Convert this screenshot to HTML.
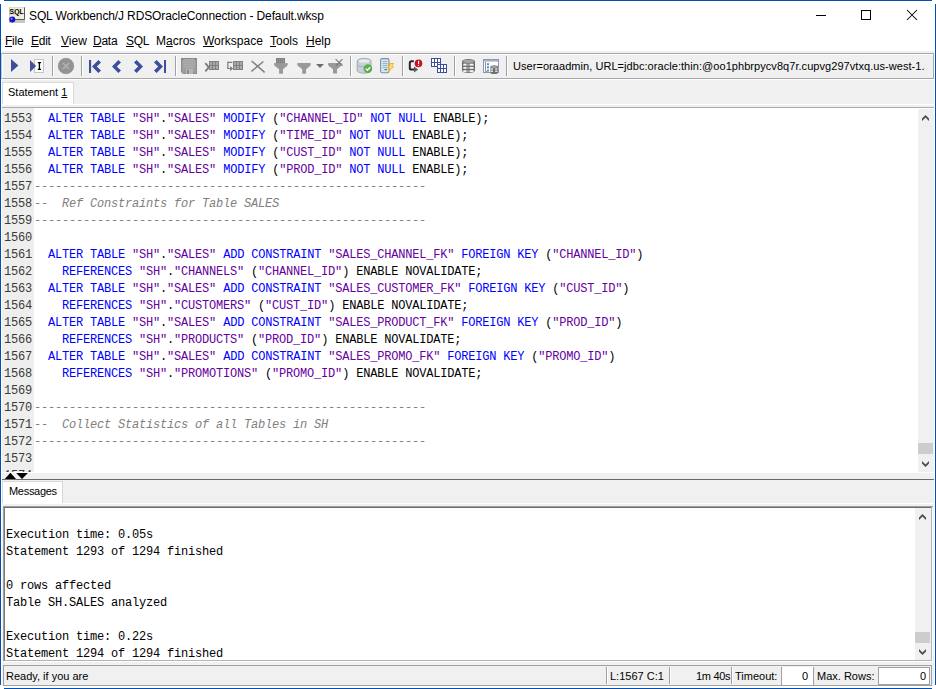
<!DOCTYPE html>
<html><head><meta charset="utf-8">
<style>
*{box-sizing:border-box;margin:0;padding:0}
html,body{width:936px;height:689px;overflow:hidden;background:#fff}
body{position:relative;font-family:"Liberation Sans",sans-serif;font-size:11px;color:#000}
.a{position:absolute}
.t{position:absolute;white-space:pre;line-height:11px;font-size:11px}
.m{position:absolute;white-space:pre;line-height:12px;font-size:12px}
.u{text-decoration:underline;text-underline-offset:1px}
.kw{color:#0000ff}
.st{color:#6600a0}
.cm{color:#808080;font-style:italic}
.cl{position:absolute;left:0;height:17px;line-height:17px;white-space:pre;font-family:"Liberation Mono",monospace;font-size:12px;letter-spacing:-0.2px;padding-left:32px;width:916px}
.ln{position:absolute;left:0;width:30px;text-align:right;color:#3a3a3a}
.ml{position:absolute;left:6px;height:17px;line-height:17px;white-space:pre;font-family:"Liberation Mono",monospace;font-size:12px;letter-spacing:-0.2px}
</style></head><body>
<!-- window border -->
<div class="a" style="left:4px;top:0;width:928px;height:1px;background:#0050b0"></div>
<div class="a" style="left:0;top:4px;width:1px;height:681px;background:#0050b0"></div>
<div class="a" style="left:935px;top:4px;width:1px;height:681px;background:#0050b0"></div>
<div class="a" style="left:4px;top:688px;width:928px;height:1px;background:#0050b0"></div>

<!-- title bar -->
<svg class="a" style="left:0;top:0" width="40" height="30" viewBox="0 0 40 30">
 <rect x="9" y="7" width="16" height="16" fill="#c8c8c8"/>
 <rect x="10" y="7.5" width="14" height="11.5" fill="#f4f2dc"/>
 <path d="M10,14.5H23.5M14.5,8V19M19,8V19" stroke="#d8d6c0" stroke-width="0.8"/>
 <path d="M24.5,7.5V19.5H12" stroke="#5a5a5a" stroke-width="1" fill="none"/>
 <text x="9.6" y="14" font-family="Liberation Sans" font-weight="bold" font-size="7.4" fill="#000" textLength="14" lengthAdjust="spacingAndGlyphs">SQL</text>
 <circle cx="12.3" cy="19.6" r="3" fill="#1414c8"/>
 <circle cx="11.6" cy="18.8" r="1" fill="#8a8aff"/>
</svg>
<div class="m" id="title" style="left:29px;top:10px;letter-spacing:-0.12px">SQL Workbench/J RDSOracleConnection - Default.wksp</div>
<div class="a" style="left:816px;top:15px;width:10px;height:1px;background:#000"></div>
<div class="a" style="left:861px;top:10px;width:10px;height:10px;border:1px solid #000"></div>
<svg class="a" style="left:900px;top:5px" width="24" height="20" viewBox="900 5 24 20">
 <path d="M907,10L917,20M917,10L907,20" stroke="#000" stroke-width="1.05"/>
</svg>

<!-- menu -->
<div id="menu">
<div class="m" style="left:5px;top:35px;letter-spacing:-0.25px"><span class="u">F</span>ile</div>
<div class="m" style="left:31px;top:35px;letter-spacing:-0.25px"><span class="u">E</span>dit</div>
<div class="m" style="left:61px;top:35px"><span class="u">V</span>iew</div>
<div class="m" style="left:93px;top:35px;letter-spacing:-0.25px"><span class="u">D</span>ata</div>
<div class="m" style="left:126px;top:35px;letter-spacing:-0.25px"><span class="u">S</span>QL</div>
<div class="m" style="left:156px;top:35px">M<span class="u">a</span>cros</div>
<div class="m" style="left:203px;top:35px"><span class="u">W</span>orkspace</div>
<div class="m" style="left:270px;top:35px"><span class="u">T</span>ools</div>
<div class="m" style="left:306px;top:35px"><span class="u">H</span>elp</div>
</div>

<!-- main gray area -->
<div class="a" style="left:1px;top:51px;width:934px;height:637px;background:#f0f0f0"></div>
<div class="a" style="left:1px;top:51px;width:1px;height:637px;background:#fff"></div>
<div class="a" style="left:934px;top:51px;width:1px;height:637px;background:#fff"></div>
<div class="a" style="left:1px;top:686px;width:934px;height:2px;background:#fff"></div>

<!-- toolbar -->
<div class="a" style="left:1px;top:53px;width:933px;height:26px;border:1px solid #a8a8a8;border-left-color:#c8c8c8;background:#f0f0f0;box-shadow:inset 1px 1px 0 #fff"></div>
<div class="a" style="left:2px;top:79px;width:932px;height:1px;background:#fff"></div>
<div id="toolbar">
<svg class="a" style="left:0;top:0" width="936" height="90" viewBox="0 0 936 90">
<g fill="#3d4f9e">
 <polygon points="11,59 18.4,65.5 11,72.1"/>
</g>
<rect x="34.5" y="59.5" width="9" height="13" fill="#fff" stroke="#c4c4c4"/>
<polygon points="30,60 36.2,66 30,72.1" fill="#47529f"/>
<path d="M37.8,62.6h3.2M39.4,62.6v6.8M37.8,69.4h3.2" stroke="#000" stroke-width="1.3" fill="none"/>
<g fill="#a0a0a0">
 <rect x="52" y="56" width="1" height="20"/><rect x="81" y="56" width="1" height="20"/>
 <rect x="175" y="56" width="1" height="20"/><rect x="350" y="56" width="1" height="20"/>
 <rect x="402" y="56" width="1" height="20"/><rect x="454" y="56" width="1" height="20"/>
 <rect x="506" y="56" width="1" height="20"/>
</g>
<g fill="#ffffff">
 <rect x="53" y="56" width="1" height="20"/><rect x="82" y="56" width="1" height="20"/>
 <rect x="176" y="56" width="1" height="20"/><rect x="351" y="56" width="1" height="20"/>
 <rect x="403" y="56" width="1" height="20"/><rect x="455" y="56" width="1" height="20"/>
 <rect x="507" y="56" width="1" height="20"/>
</g>
<circle cx="66" cy="66" r="7.8" fill="#939393" stroke="#8a8a8a" stroke-width="0.6"/>
<path d="M63,63L69,69M69,63L63,69" stroke="#b4b4b4" stroke-width="1.6"/>
<g fill="#3c4e9c">
 <rect x="89" y="60" width="2.1" height="13"/>
 <polygon points="92,66.5 98.4,60 101,62.4 96.8,66.5 101,70.6 98.4,73"/>
 <polygon points="112,66.5 118.4,60 121,62.4 116.8,66.5 121,70.6 118.4,73"/>
 <polygon points="143,66.5 136.6,60 134,62.4 138.2,66.5 134,70.6 136.6,73"/>
 <polygon points="163,66.5 156.6,60 154,62.4 158.2,66.5 154,70.6 156.6,73"/>
 <rect x="164" y="60" width="2" height="13"/>
</g>
<!-- floppy -->
<path d="M181,58H197V74H183L181,72Z" fill="#8c8c8c"/>
<rect x="182" y="59" width="14" height="14" fill="#9e9e9e"/>
<rect x="183.5" y="59" width="11" height="9" fill="#aaaaaa"/>
<path d="M184,61.5h10M184,63.5h10M184,65.5h10" stroke="#a0a0a0" stroke-width="0.7"/>
<rect x="182" y="59" width="1" height="1" fill="#7a7a7a"/><rect x="195" y="59" width="1" height="1" fill="#7a7a7a"/>
<rect x="186" y="69" width="7" height="5" fill="#b5b5b5"/>
<rect x="187" y="70" width="2" height="4" fill="#8c8c8c"/>
<!-- insert row -->
<g>
 <rect x="209" y="61" width="10" height="9" fill="#808080"/>
 <g fill="#a9a9a9"><rect x="210" y="62" width="2" height="3"/><rect x="213" y="62" width="2" height="3"/><rect x="216" y="62" width="2" height="3"/>
 <rect x="210" y="66" width="2" height="3"/><rect x="213" y="66" width="2" height="3"/><rect x="216" y="66" width="2" height="3"/></g>
 <path d="M205.3,63.2L208.8,67.3L205.3,71.4" stroke="#7a7a7a" stroke-width="1.8" fill="none"/>
</g>
<g>
 <rect x="233" y="61" width="10" height="9" fill="#808080"/>
 <g fill="#a9a9a9"><rect x="234" y="62" width="2" height="3"/><rect x="237" y="62" width="2" height="3"/><rect x="240" y="62" width="2" height="3"/>
 <rect x="234" y="66" width="2" height="3"/><rect x="237" y="66" width="2" height="3"/><rect x="240" y="66" width="2" height="3"/></g>
 <path d="M232.3,62.3H227.8V68.5H231.5" stroke="#7a7a7a" stroke-width="1.2" fill="none"/>
 <polygon points="230.2,66 233,68.5 230.2,71.2" fill="#7a7a7a"/>
</g>
<path d="M251.6,61L264.6,72.4M263.4,61.5L251.4,71.4" stroke="#808080" stroke-width="1.5"/>
<!-- funnels -->
<rect x="276" y="58" width="9" height="5" fill="#808080"/>
<g fill="#a5a5a5"><rect x="277" y="59" width="1" height="1"/><rect x="279" y="59" width="1" height="1"/><rect x="281" y="59" width="1" height="1"/><rect x="283" y="59" width="1" height="1"/>
<rect x="277" y="61" width="1" height="1"/><rect x="279" y="61" width="1" height="1"/><rect x="281" y="61" width="1" height="1"/><rect x="283" y="61" width="1" height="1"/></g>
<g fill="#999999">
 <polygon points="274.2,63 287.6,63 287.6,65.5 283,69.2 283,73.7 279.1,73.7 279.1,69.2 274.2,65.5"/>
 <polygon points="297.4,63 310.6,63 310.6,65.5 306.1,69.2 306.1,73.8 302.2,73.8 302.2,69.2 297.4,65.5"/>
 <polygon points="328.2,63 341.7,63 341.7,65.5 337,69.2 337,73.5 333,73.5 333,69.2 328.2,65.5"/>
</g>
<polygon points="316,64 324,64 320,68.1" fill="#6c6c6c"/>
<path d="M335.6,59.2L342.6,65.6M342.4,59.2L336,65.6" stroke="#767676" stroke-width="1.1"/>
<!-- db check -->
<path d="M357.2,61A6.9,2.6 0 0 1 371,61V70.6A6.9,2.6 0 0 1 357.2,70.6Z" fill="#c9d0d8" stroke="#9ba4ae" stroke-width="0.9"/>
<ellipse cx="364.1" cy="61" rx="5.6" ry="1.6" fill="#e8edf2"/>
<path d="M357.4,65.3A6.9,2.2 0 0 0 370.8,65.3" stroke="#9ba4ae" stroke-width="0.8" fill="none"/>
<circle cx="367.9" cy="68.6" r="4.3" fill="#5aae4e"/>
<path d="M365.8,68.6L367.4,70.2L370.2,67.2" stroke="#fff" stroke-width="1.3" fill="none"/>
<!-- server lightning -->
<rect x="380.6" y="58.6" width="8.4" height="14.2" rx="1.6" fill="#dce5ee" stroke="#7b90aa" stroke-width="1.1"/>
<path d="M382.5,61.6h5M382.5,63.6h5M382.5,65.6h5M382.5,67.6h5" stroke="#8aa0b9" stroke-width="0.8"/>
<rect x="384.5" y="69" width="2.5" height="1.2" fill="#2f9a2f"/>
<polygon points="389.8,63 394.2,63 392.2,66.4 394.4,66.4 387.6,73 389.6,68.4 387.4,68.4" fill="#f2ae2c"/>
<polygon points="390.6,64 392.8,64 391.2,67.2 392.6,67.2 389.4,70.8 390.3,67.9 389,67.9" fill="#fbe27a"/>
<!-- loop arrow -->
<path d="M413.8,61.3H411.2Q409.8,61.3 409.8,62.8V68Q409.8,69.6 411.4,69.6H415" stroke="#262626" stroke-width="2" fill="none"/>
<polygon points="414,66.6 418.2,69.6 414,72.6" fill="#5a5a5a"/>
<circle cx="418.5" cy="63.4" r="3.8" fill="#c5141b"/>
<rect x="418" y="60.8" width="1.1" height="3.2" fill="#fff"/><rect x="418" y="64.8" width="1.1" height="1.1" fill="#fff"/>
<!-- grids -->
<g fill="#3b4d9b">
 <rect x="431" y="58" width="10" height="9"/>
</g>
<g fill="#fff"><rect x="432" y="59" width="2" height="3"/><rect x="435" y="59" width="2" height="3"/><rect x="438" y="59" width="2" height="3"/>
<rect x="432" y="63" width="2" height="3"/><rect x="435" y="63" width="2" height="3"/><rect x="438" y="63" width="2" height="3"/></g>
<rect x="437" y="64" width="10" height="9" fill="#3b4d9b"/>
<g fill="#fff"><rect x="438" y="65" width="2" height="3"/><rect x="441" y="65" width="2" height="3"/><rect x="444" y="65" width="2" height="3"/>
<rect x="438" y="69" width="2" height="3"/><rect x="441" y="69" width="2" height="3"/><rect x="444" y="69" width="2" height="3"/></g>
<!-- db gray -->
<path d="M462,61.4A6.5,2.4 0 0 1 475,61.4V70.6A6.5,2.4 0 0 1 462,70.6Z" fill="#6c6c6c"/>
<ellipse cx="468.5" cy="61.4" rx="5.6" ry="1.7" fill="#a8a8a8"/>
<g fill="#9c9c9c"><rect x="463" y="63.6" width="11" height="2.2" rx="0.6"/><rect x="463" y="66.8" width="11" height="2.2" rx="0.6"/><rect x="463" y="70" width="11" height="2.2" rx="0.6"/></g>
<g fill="#f4f4f4"><rect x="463.4" y="63.8" width="3" height="1.8" rx="0.5"/><rect x="463.4" y="67" width="3" height="1.8" rx="0.5"/><rect x="463.4" y="70.2" width="3" height="1.8" rx="0.5"/>
<rect x="469.8" y="63.8" width="3.6" height="1.8" rx="0.5"/><rect x="469.8" y="67" width="3.6" height="1.8" rx="0.5"/><rect x="469.8" y="70.2" width="3.6" height="1.8" rx="0.5"/></g>
<!-- window db -->
<rect x="483.5" y="59.5" width="15" height="13" fill="#fff" stroke="#8799b4"/>
<rect x="484" y="60" width="14" height="1.6" fill="#a3b0c6"/>
<path d="M485.5,62V71.5H487" stroke="#666" stroke-width="0.7" fill="none"/>
<g fill="#5590d0"><rect x="487" y="63.2" width="2" height="2"/><rect x="487" y="66.4" width="2" height="2"/><rect x="487" y="69.6" width="2" height="2"/></g>
<path d="M490.4,66.8A3.8,1.5 0 0 1 498,66.8V72.4A3.8,1.5 0 0 1 490.4,72.4Z" fill="#707070"/>
<ellipse cx="494.2" cy="66.8" rx="3.2" ry="1" fill="#a8a8a8"/>
<g fill="#f0f0f0"><rect x="491" y="68.3" width="2" height="1.3"/><rect x="495.2" y="68.3" width="2.2" height="1.3"/><rect x="491" y="70.6" width="2" height="1.3"/><rect x="495.2" y="70.6" width="2.2" height="1.3"/></g>
</svg>
</div>
<div class="a" style="left:513px;top:56px;width:412px;height:18px;overflow:hidden"><div class="t" style="left:0;top:5px;letter-spacing:0.055px">User=oraadmin, URL=jdbc:oracle:thin:@oo1phbrpycv8q7r.cupvg297vtxq.us-west-1.amazonaws.com:1521:ORCL</div></div>

<!-- statement tab -->
<div class="a" style="left:2px;top:82px;width:72px;height:23px;background:#fff;border:1px solid #d9d9d9;border-bottom:none"></div>
<div class="a" style="left:2px;top:104px;width:932px;height:1px;background:#fff"></div>
<div class="t" style="left:8px;top:87px">Statement <span class="u">1</span></div>
<div class="a" style="left:2px;top:107px;width:932px;height:1px;background:#ababab"></div>

<!-- editor -->
<div class="a" style="left:2px;top:108px;width:916px;height:365px;background:#fff;overflow:hidden">
  <div class="a" style="left:0;top:0;width:32px;height:364px;background:#eeefec;overflow:hidden"></div>
<div id="code" class="a" style="left:0;top:0;width:916px;height:364px;overflow:hidden">
<div class="cl" style="top:3px"><span class="ln">1553</span>  <span class="kw">ALTER</span> <span class="kw">TABLE</span> <span class="st">"SH"</span>.<span class="st">"SALES"</span> <span class="kw">MODIFY</span> (<span class="st">"CHANNEL_ID"</span> <span class="kw">NOT</span> <span class="kw">NULL</span> ENABLE);</div>
<div class="cl" style="top:20px"><span class="ln">1554</span>  <span class="kw">ALTER</span> <span class="kw">TABLE</span> <span class="st">"SH"</span>.<span class="st">"SALES"</span> <span class="kw">MODIFY</span> (<span class="st">"TIME_ID"</span> <span class="kw">NOT</span> <span class="kw">NULL</span> ENABLE);</div>
<div class="cl" style="top:37px"><span class="ln">1555</span>  <span class="kw">ALTER</span> <span class="kw">TABLE</span> <span class="st">"SH"</span>.<span class="st">"SALES"</span> <span class="kw">MODIFY</span> (<span class="st">"CUST_ID"</span> <span class="kw">NOT</span> <span class="kw">NULL</span> ENABLE);</div>
<div class="cl" style="top:54px"><span class="ln">1556</span>  <span class="kw">ALTER</span> <span class="kw">TABLE</span> <span class="st">"SH"</span>.<span class="st">"SALES"</span> <span class="kw">MODIFY</span> (<span class="st">"PROD_ID"</span> <span class="kw">NOT</span> <span class="kw">NULL</span> ENABLE);</div>
<div class="cl" style="top:71px"><span class="ln">1557</span><span class="cm">--------------------------------------------------------</span></div>
<div class="cl" style="top:88px"><span class="ln">1558</span><span class="cm">--  Ref Constraints for Table SALES</span></div>
<div class="cl" style="top:105px"><span class="ln">1559</span><span class="cm">--------------------------------------------------------</span></div>
<div class="cl" style="top:122px"><span class="ln">1560</span></div>
<div class="cl" style="top:139px"><span class="ln">1561</span>  <span class="kw">ALTER</span> <span class="kw">TABLE</span> <span class="st">"SH"</span>.<span class="st">"SALES"</span> <span class="kw">ADD</span> <span class="kw">CONSTRAINT</span> <span class="st">"SALES_CHANNEL_FK"</span> <span class="kw">FOREIGN</span> <span class="kw">KEY</span> (<span class="st">"CHANNEL_ID"</span>)</div>
<div class="cl" style="top:156px"><span class="ln">1562</span>    <span class="kw">REFERENCES</span> <span class="st">"SH"</span>.<span class="st">"CHANNELS"</span> (<span class="st">"CHANNEL_ID"</span>) ENABLE NOVALIDATE;</div>
<div class="cl" style="top:173px"><span class="ln">1563</span>  <span class="kw">ALTER</span> <span class="kw">TABLE</span> <span class="st">"SH"</span>.<span class="st">"SALES"</span> <span class="kw">ADD</span> <span class="kw">CONSTRAINT</span> <span class="st">"SALES_CUSTOMER_FK"</span> <span class="kw">FOREIGN</span> <span class="kw">KEY</span> (<span class="st">"CUST_ID"</span>)</div>
<div class="cl" style="top:190px"><span class="ln">1564</span>    <span class="kw">REFERENCES</span> <span class="st">"SH"</span>.<span class="st">"CUSTOMERS"</span> (<span class="st">"CUST_ID"</span>) ENABLE NOVALIDATE;</div>
<div class="cl" style="top:207px"><span class="ln">1565</span>  <span class="kw">ALTER</span> <span class="kw">TABLE</span> <span class="st">"SH"</span>.<span class="st">"SALES"</span> <span class="kw">ADD</span> <span class="kw">CONSTRAINT</span> <span class="st">"SALES_PRODUCT_FK"</span> <span class="kw">FOREIGN</span> <span class="kw">KEY</span> (<span class="st">"PROD_ID"</span>)</div>
<div class="cl" style="top:224px"><span class="ln">1566</span>    <span class="kw">REFERENCES</span> <span class="st">"SH"</span>.<span class="st">"PRODUCTS"</span> (<span class="st">"PROD_ID"</span>) ENABLE NOVALIDATE;</div>
<div class="cl" style="top:241px"><span class="ln">1567</span>  <span class="kw">ALTER</span> <span class="kw">TABLE</span> <span class="st">"SH"</span>.<span class="st">"SALES"</span> <span class="kw">ADD</span> <span class="kw">CONSTRAINT</span> <span class="st">"SALES_PROMO_FK"</span> <span class="kw">FOREIGN</span> <span class="kw">KEY</span> (<span class="st">"PROMO_ID"</span>)</div>
<div class="cl" style="top:258px"><span class="ln">1568</span>    <span class="kw">REFERENCES</span> <span class="st">"SH"</span>.<span class="st">"PROMOTIONS"</span> (<span class="st">"PROMO_ID"</span>) ENABLE NOVALIDATE;</div>
<div class="cl" style="top:275px"><span class="ln">1569</span></div>
<div class="cl" style="top:292px"><span class="ln">1570</span><span class="cm">--------------------------------------------------------</span></div>
<div class="cl" style="top:309px"><span class="ln">1571</span><span class="cm">--  Collect Statistics of all Tables in SH</span></div>
<div class="cl" style="top:326px"><span class="ln">1572</span><span class="cm">--------------------------------------------------------</span></div>
<div class="cl" style="top:343px"><span class="ln">1573</span></div>
<div class="cl" style="top:360px"><span class="ln">1574</span></div>
</div>
</div>
<!-- editor scrollbar -->
<div class="a" style="left:918px;top:108px;width:16px;height:1px;background:#fff"></div>
<div class="a" style="left:918px;top:109px;width:16px;height:363px;background:#f0f0f0"></div>
<div class="a" style="left:918px;top:472px;width:16px;height:1px;background:#fafafa"></div>
<div class="a" style="left:918px;top:443px;width:15px;height:11px;background:#cdcdcd"></div>
<svg class="a" style="left:900px;top:100px" width="36" height="380" viewBox="900 100 36 380">
 <polygon points="922,121 922,118.4 925.5,114.9 929,118.4 929,121 925.5,117.5" fill="#4a4a4a"/>
 <polygon points="922,461 922,463.6 925.5,467.1 929,463.6 929,461 925.5,464.5" fill="#4a4a4a"/>
</svg>

<!-- splitter -->
<svg class="a" style="left:0;top:468px" width="40" height="14" viewBox="0 468 40 14">
 <polygon points="4.8,479 10.4,472.8 16,479" fill="#000"/>
 <polygon points="16.2,472.9 27.9,472.9 22,479" fill="#000"/>
</svg>
<div class="a" style="left:2px;top:479px;width:932px;height:1px;background:#696969"></div>

<!-- messages tab -->
<div class="a" style="left:2px;top:481px;width:61px;height:23px;background:#fff;border:1px solid #d9d9d9;border-bottom:none"></div>
<div class="a" style="left:2px;top:503px;width:932px;height:1px;background:#fff"></div>
<div class="a" style="left:3px;top:506px;width:930px;height:1px;background:#a0a0a0"></div>
<div class="a" style="left:3px;top:506px;width:1px;height:155px;background:#a0a0a0"></div>
<div class="t" style="left:9px;top:486px;letter-spacing:-0.3px">Messages</div>

<!-- messages area -->
<div class="a" style="left:4px;top:507px;width:928px;height:154px;background:#fff;border-top:1px solid #6d6d6d;border-left:1px solid #7a7a7a;border-right:1px solid #b4b4b4;border-bottom:1px solid #b4b4b4"></div>
<div class="a" style="left:932px;top:507px;width:1px;height:155px;background:#fff"></div>
<div class="a" style="left:4px;top:661px;width:929px;height:1px;background:#fff"></div>
<div class="a" style="left:915px;top:508px;width:16px;height:152px;background:#f0f0f0"></div>
<div class="a" style="left:915px;top:632px;width:15px;height:11px;background:#cdcdcd"></div>
<svg class="a" style="left:900px;top:500px" width="36" height="165" viewBox="900 500 36 165">
 <polygon points="919,520 919,517.4 922.5,513.9 926,517.4 926,520 922.5,516.5" fill="#4a4a4a"/>
 <polygon points="919,649 919,651.6 922.5,655.1 926,651.6 926,649 922.5,652.5" fill="#4a4a4a"/>
</svg>
<div id="msgs">
<div class="ml" style="top:527px">Execution time: 0.05s</div>
<div class="ml" style="top:544px">Statement 1293 of 1294 finished</div>
<div class="ml" style="top:578px">0 rows affected</div>
<div class="ml" style="top:595px">Table SH.SALES analyzed</div>
<div class="ml" style="top:629px">Execution time: 0.22s</div>
<div class="ml" style="top:646px">Statement 1294 of 1294 finished</div>
</div>

<!-- status bar -->
<div class="a" style="left:3px;top:665px;width:929px;height:21px;border:1px solid #a0a0a0"></div>
<div class="t" style="left:6px;top:671px">Ready, if you are</div>
<div class="a" style="left:606px;top:667px;width:1px;height:17px;background:#a0a0a0"></div>
<div class="a" style="left:607px;top:667px;width:1px;height:17px;background:#fff"></div>
<div class="t" style="left:610px;top:671px">L:1567 C:1</div>
<div class="a" style="left:669px;top:667px;width:1px;height:17px;background:#a0a0a0"></div>
<div class="a" style="left:670px;top:667px;width:1px;height:17px;background:#fff"></div>
<div class="t" style="left:696px;top:671px;letter-spacing:-0.3px">1m 40s</div>
<div class="a" style="left:731px;top:667px;width:1px;height:17px;background:#a0a0a0"></div>
<div class="a" style="left:732px;top:667px;width:1px;height:17px;background:#fff"></div>
<div class="t" style="left:735px;top:671px">Timeout:</div>
<div class="a" style="left:781px;top:667px;width:33px;height:18px;background:#fff;border-left:1px solid #a0a0a0;border-right:1px solid #a0a0a0"></div>
<div class="t" style="left:802px;top:671px">0</div>
<div class="t" style="left:817px;top:671px">Max. Rows:</div>
<div class="a" style="left:878px;top:667px;width:52px;height:18px;background:#fff;border:1px solid #a0a0a0"></div>
<div class="t" style="left:920px;top:671px">0</div>
</body></html>
